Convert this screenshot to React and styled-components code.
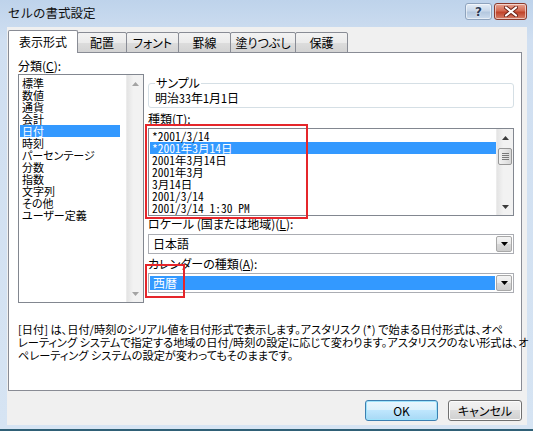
import React from 'react';
import styled, { createGlobalStyle } from 'styled-components';

const GlobalStyle = createGlobalStyle`
  html, body {
    margin: 0;
    padding: 0;
  }
  body {
    font-family: "Noto Sans CJK JP", "Noto Sans", sans-serif;
    font-size: 12px;
    color: #000;
    background: #fff;
  }
  * {
    box-sizing: border-box;
  }
`;

const categories = [
  '標準', '数値', '通貨', '会計', '日付', '時刻',
  'パーセンテージ', '分数', '指数', '文字列', 'その他', 'ユーザー定義'
];

const types = [
  '*2001/3/14',
  '*2001年3月14日',
  '2001年3月14日',
  '2001年3月',
  '3月14日',
  '2001/3/14',
  '2001/3/14 1:30 PM'
];

const tabs = [
  { label: '表示形式', width: 70, active: true },
  { label: '配置', width: 50 },
  { label: 'フォント', width: 53 },
  { label: '罫線', width: 53 },
  { label: '塗りつぶし', width: 66 },
  { label: '保護', width: 53 }
];

// Window frame
const Window = styled.div`
  width: 533px;
  height: 431px;
  display: flex;
  flex-direction: column;
  padding: 0 6px 4px 7px;
  background: linear-gradient(#bed3eb, #d0dff1 40px, #d6e4f3);
  border-bottom: 2px solid #2f6076;
`;

const TitleBar = styled.div`
  height: 27px;
  display: flex;
  justify-content: space-between;
  align-items: flex-start;
`;

const Title = styled.div`
  padding: 6px 0 0 1px;
  line-height: 14px;
  font-size: 12.5px;
  color: #111;
`;

const CaptionButtons = styled.div`
  display: flex;
  gap: 2px;
  margin-top: 3px;
`;

const CaptionButton = styled.div`
  width: ${p => p.$w}px;
  height: 17px;
  border: 1px solid ${p => (p.$close ? '#8b3a2c' : '#8ea3bd')};
  border-radius: 3px;
  display: flex;
  align-items: center;
  justify-content: center;
  background: ${p =>
    p.$close
      ? 'linear-gradient(#e6a493, #d46a52 45%, #c0432a 55%, #d6806a)'
      : 'linear-gradient(#e4edf7, #c9d8ea 45%, #b4c8df 55%, #cddcee)'};
  box-shadow: inset 0 0 0 1px rgba(255, 255, 255, 0.55);
  color: #2b3b55;
  font-family: "DejaVu Sans", sans-serif;
  font-weight: bold;
  font-size: 12px;
  line-height: 1;
  text-shadow: 0 0 2px #fff;
`;

const Body = styled.div`
  flex: 1;
  background: #f0f0f0;
  display: flex;
  flex-direction: column;
  padding: 3px 5px 0 1px;
`;

// Tabs
const TabStrip = styled.div`
  display: flex;
  align-items: flex-end;
  height: 23px;
  margin-bottom: -1px;
  position: relative;
  z-index: 1;
`;

const Tab = styled.div`
  width: ${p => p.$w}px;
  height: ${p => (p.$active ? 23 : 21)}px;
  margin-left: ${p => (p.$first ? 0 : -1)}px;
  border: 1px solid #898c95;
  border-bottom: ${p => (p.$active ? 'none' : '1px solid #898c95')};
  border-radius: 2px 2px 0 0;
  background: ${p =>
    p.$active ? '#fff' : 'linear-gradient(#f3f3f3, #ebebeb 50%, #dddddd 50%, #d3d3d3)'};
  position: relative;
  z-index: ${p => (p.$active ? 2 : 1)};
  display: flex;
  align-items: center;
  justify-content: center;
  padding-bottom: ${p => (p.$active ? 1 : 0)}px;
  font-size: 12px;
  font-feature-settings: "palt";
`;

const Panel = styled.div`
  height: 339px;
  border: 1px solid #898c95;
  background: #fff;
  padding: 7px 7px 0 9px;
  display: grid;
  grid-template-columns: 126px 1fr;
  column-gap: 4px;
  align-content: start;
`;

const Column = styled.div`
  display: flex;
  flex-direction: column;
`;

const FieldLabel = styled.div`
  line-height: 12px;
  height: 12px;
  margin-top: ${p => p.$mt || 0}px;
  margin-bottom: ${p => p.$mb || 0}px;
  white-space: nowrap;
  font-feature-settings: "palt";
`;

// List boxes
const ListBox = styled.div`
  height: ${p => p.$h}px;
  border: 1px solid #828790;
  background: #fff;
  display: flex;
`;

const ListItems = styled.div`
  flex: 1;
  padding-top: ${p => p.$pt}px;
  overflow: hidden;
`;

const ListItem = styled.div`
  height: 12px;
  line-height: 12px;
  margin-left: 1px;
  width: ${p => (p.$w ? `${p.$w}px` : 'auto')};
  padding-left: 2px;
  white-space: nowrap;
  font-size: ${p => (p.$mono ? 11.5 : 11)}px;
  background: ${p => (p.$selected ? '#3399ff' : 'transparent')};
  color: ${p => (p.$selected ? '#fff' : '#000')};
  font-feature-settings: ${p => (p.$mono ? '"hwid"' : '"palt"')};
`;

const ScrollBar = styled.div`
  width: 17px;
  display: flex;
  flex-direction: column;
  justify-content: space-between;
  background: linear-gradient(90deg, #e4e4e4, #f2f2f2 40%, #f2f2f2);
  border-left: 1px solid #ececec;
`;

const ScrollTrack = styled.div`
  flex: 1;
  padding-top: 2px;
`;

const ScrollArrow = styled.div`
  height: 17px;
  display: flex;
  align-items: center;
  justify-content: center;
`;

const Thumb = styled.div`
  height: 17px;
  margin: 0 1px;
  border: 1px solid #979797;
  border-radius: 2px;
  background: linear-gradient(90deg, #f2f2f2, #e6e6e6 50%, #d8d8d8);
  display: flex;
  align-items: center;
  justify-content: center;

  &::after {
    content: '';
    width: 7px;
    height: 7px;
    background: repeating-linear-gradient(#7a7a7a 0 1px, transparent 1px 2px);
  }
`;

const Arrow = ({ up, color }) => (
  <svg width="7" height="4" viewBox="0 0 7 4">
    <path d={up ? 'M0 4 L3.5 0 L7 4 Z' : 'M0 0 L3.5 4 L7 0 Z'} fill={color} />
  </svg>
);

// Group box
const GroupBox = styled.fieldset`
  margin: 17px 0 0 0;
  min-width: 0;
  padding: 0 6px 3px 6px;
  border: 1px solid #d5dfe5;
  border-radius: 3px;
`;

const GroupLegend = styled.legend`
  padding: 0 1px;
  line-height: 12px;
  font-size: 12px;
  font-feature-settings: "palt";
`;

const SampleText = styled.div`
  line-height: 12px;
  margin-top: 3px;
  font-feature-settings: "hwid";
`;

// Combo boxes
const Combo = styled.div`
  height: 20px;
  border: 1px solid #abadb3;
  background: #fff;
  display: flex;
  padding: 1px;
  margin-top: ${p => p.$mt || 0}px;
`;

const ComboValue = styled.div`
  flex: 1;
  margin: 1px 1px 1px 0;
  padding-left: 3px;
  line-height: 14px;
  background: ${p => (p.$selected ? '#3399ff' : 'transparent')};
  color: ${p => (p.$selected ? '#fff' : '#000')};
`;

const DropButton = styled.div`
  width: 16px;
  border: 1px solid #a8a8a8;
  border-radius: 2px;
  background: linear-gradient(#f4f4f4, #e8e8e8 50%, #d8d8d8 50%, #cdcdcd);
  display: flex;
  align-items: center;
  justify-content: center;
`;

// Red annotations over the content
const Annotated = styled.div`
  position: relative;
`;

const RedBox = styled.div`
  position: absolute;
  border: 2px solid #e5262b;
  left: ${p => p.$l}px;
  top: ${p => p.$t}px;
  width: ${p => p.$w}px;
  height: ${p => p.$h}px;
  pointer-events: none;
`;

const Description = styled.div`
  grid-column: 1 / -1;
  margin-top: 20px;
  font-size: 11.2px;
  line-height: 13px;
  white-space: nowrap;
  font-feature-settings: "palt";
`;

// Buttons
const ButtonRow = styled.div`
  display: flex;
  justify-content: flex-end;
  gap: 10px;
  padding-top: 9px;
`;

const PushButton = styled.div`
  width: ${p => p.$w}px;
  height: 21px;
  border: 1px solid ${p => (p.$default ? '#3c7fb1' : '#707070')};
  border-radius: 3px;
  background: ${p =>
    p.$default
      ? 'linear-gradient(#eaf6fd, #d9f0fc 50%, #bee6fd 50%, #a7d9f5)'
      : 'linear-gradient(#f2f2f2, #ebebeb 50%, #dddddd 50%, #cfcfcf)'};
  box-shadow: inset 0 0 0 1px ${p => (p.$default ? '#9fe3fb' : '#fcfcfc')};
  display: flex;
  align-items: center;
  justify-content: center;
  font-size: 12px;
  font-feature-settings: "palt";
`;

const CloseIcon = () => (
  <svg width="14" height="11" viewBox="0 0 14 11">
    <path d="M2 1.5 L12 9.5 M12 1.5 L2 9.5" stroke="#6b2318" strokeWidth="4" strokeLinecap="round" />
    <path d="M2 1.5 L12 9.5 M12 1.5 L2 9.5" stroke="#fff" strokeWidth="2.2" strokeLinecap="round" />
  </svg>
);

export default function App() {
  return (
    <>
      <GlobalStyle />
      <Window>
        <TitleBar>
          <Title>セルの書式設定</Title>
          <CaptionButtons>
            <CaptionButton $w={27}>?</CaptionButton>
            <CaptionButton $w={33} $close>
              <CloseIcon />
            </CaptionButton>
          </CaptionButtons>
        </TitleBar>

        <Body>
          <TabStrip>
            {tabs.map((t, i) => (
              <Tab key={t.label} $w={t.width} $active={t.active} $first={i === 0}>
                {t.label}
              </Tab>
            ))}
          </TabStrip>

          <Panel>
            <Column>
              <FieldLabel $mb={2}>
                分類(<u>C</u>):
              </FieldLabel>
              <ListBox $h={229}>
                <ListItems $pt={2}>
                  {categories.map(c => (
                    <ListItem key={c} $w={100} $selected={c === '日付'}>
                      {c}
                    </ListItem>
                  ))}
                </ListItems>
                <ScrollBar>
                  <ScrollArrow>
                    <Arrow up color="#a3a3a3" />
                  </ScrollArrow>
                  <ScrollArrow>
                    <Arrow color="#a3a3a3" />
                  </ScrollArrow>
                </ScrollBar>
              </ListBox>
            </Column>

            <Column>
              <GroupBox>
                <GroupLegend>サンプル</GroupLegend>
                <SampleText>明治33年1月1日</SampleText>
              </GroupBox>

              <FieldLabel $mt={5} $mb={3}>
                種類(<u>T</u>):
              </FieldLabel>
              <Annotated>
                <ListBox $h={88}>
                  <ListItems $pt={1}>
                    {types.map((t, i) => (
                      <ListItem key={t + i} $mono $selected={i === 1}>
                        {t}
                      </ListItem>
                    ))}
                  </ListItems>
                  <ScrollBar>
                    <ScrollArrow>
                      <Arrow up color="#3b3b3b" />
                    </ScrollArrow>
                    <ScrollTrack>
                      <Thumb />
                    </ScrollTrack>
                    <ScrollArrow>
                      <Arrow color="#3b3b3b" />
                    </ScrollArrow>
                  </ScrollBar>
                </ListBox>
                <RedBox $l={-3} $t={-4} $w={163} $h={95} />
              </Annotated>

              <FieldLabel $mt={2}>
                ロケール (国または地域)(<u>L</u>):
              </FieldLabel>
              <Combo $mt={4}>
                <ComboValue>日本語</ComboValue>
                <DropButton>
                  <Arrow color="#000" />
                </DropButton>
              </Combo>

              <FieldLabel $mt={4}>
                カレンダーの種類(<u>A</u>):
              </FieldLabel>
              <Annotated>
                <Combo $mt={3}>
                  <ComboValue $selected>西暦</ComboValue>
                  <DropButton>
                    <Arrow color="#000" />
                  </DropButton>
                </Combo>
                <RedBox $l={-3} $t={-6} $w={40} $h={34} />
              </Annotated>
            </Column>

            <Description>
              [日付] は、日付/時刻のシリアル値を日付形式で表示します。アスタリスク (*) で始まる日付形式は、オペ
              <br />
              レーティング システムで指定する地域の日付/時刻の設定に応じて変わります。アスタリスクのない形式は、オ
              <br />
              ペレーティング システムの設定が変わってもそのままです。
            </Description>
          </Panel>

          <ButtonRow>
            <PushButton $w={73} $default>OK</PushButton>
            <PushButton $w={74}>キャンセル</PushButton>
          </ButtonRow>
        </Body>
      </Window>
    </>
  );
}
